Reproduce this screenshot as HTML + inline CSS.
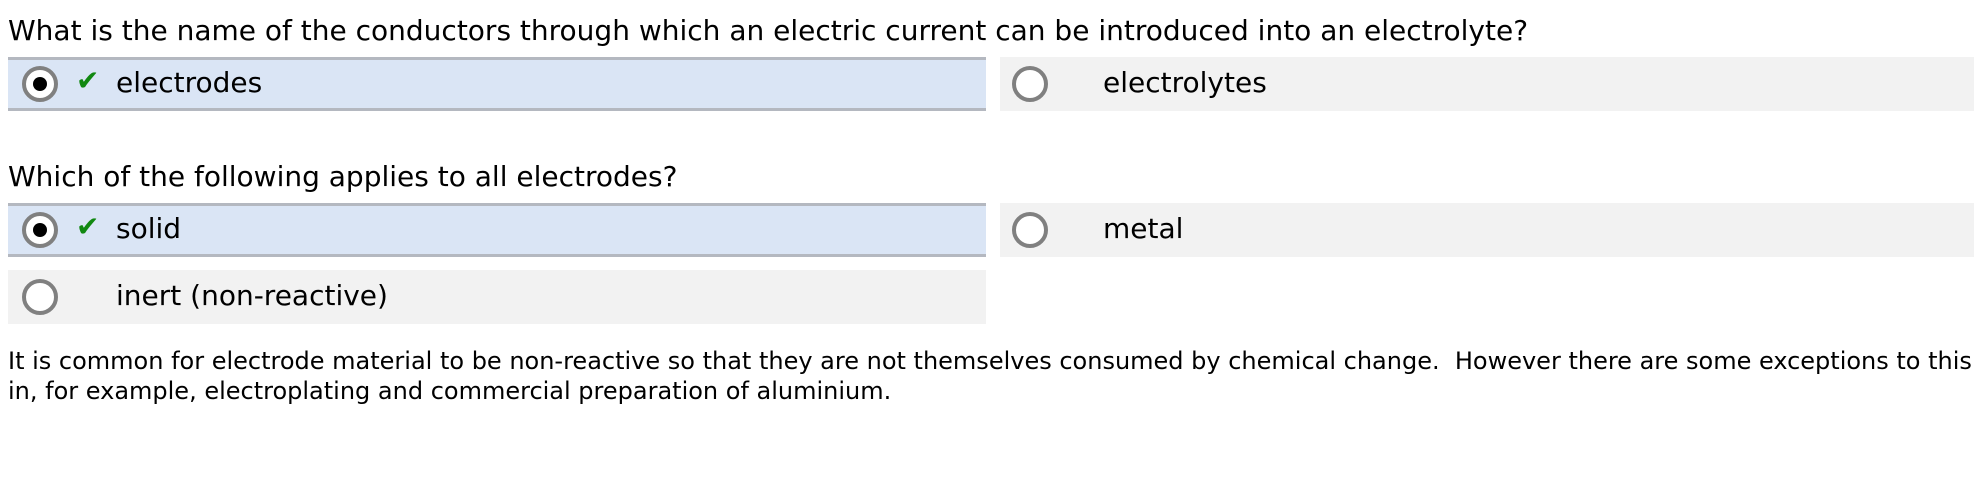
<!DOCTYPE html>
<html><head><meta charset="utf-8"><style>
body{margin:0;width:1974px;height:482px;background:#fff;font-family:"DejaVu Sans","Liberation Sans",sans-serif;font-size:24px;color:#000;position:relative;overflow:hidden}
.t{position:absolute;left:8px;white-space:nowrap}
.q{font-size:28px;line-height:33px}
.box{position:absolute;height:54px;box-sizing:border-box}
.sel{background:#dae5f5;border-top:3px solid #b4b8c0;border-bottom:3px solid #b4b8c0;left:8px;width:978px}
.un{background:#f2f2f2}
.r{position:absolute;width:36px;height:36px;border:4px solid #808080;border-radius:50%;background:#fff;box-sizing:border-box;top:50%;margin-top:-18px}
.r.on::after{content:"";position:absolute;left:7px;top:7px;width:14px;height:14px;border-radius:50%;background:#000}
.ck{position:absolute;left:68px;top:50%;margin-top:-20px;line-height:34px;color:#118811;font-size:28px;font-family:"DejaVu Sans",sans-serif}
.lbl{position:absolute;top:50%;margin-top:-18px;line-height:34px;font-size:28px}
</style></head><body>
<div class="t q" style="top:14px">What is the name of the conductors through which an electric current can be introduced into an electrolyte?</div>
<div class="box sel" style="top:57px"><div class="r on" style="left:14px"></div><div class="ck">✔</div><div class="lbl" style="left:108px">electrodes</div></div>
<div class="box un" style="top:57px;left:1000px;width:974px"><div class="r" style="left:12px"></div><div class="lbl" style="left:103px">electrolytes</div></div>
<div class="t q" style="top:160px">Which of the following applies to all electrodes?</div>
<div class="box sel" style="top:203px"><div class="r on" style="left:14px"></div><div class="ck">✔</div><div class="lbl" style="left:108px">solid</div></div>
<div class="box un" style="top:203px;left:1000px;width:974px"><div class="r" style="left:12px"></div><div class="lbl" style="left:103px">metal</div></div>
<div class="box un" style="top:270px;left:8px;width:978px"><div class="r" style="left:14px"></div><div class="lbl" style="left:108px">inert (non-reactive)</div></div>
<div class="t" style="top:346px;line-height:30px">It is common for electrode material to be non-reactive so that they are not themselves consumed by chemical change.&nbsp; However there are some exceptions to this<br>in, for example, electroplating and commercial preparation of aluminium.</div>
</body></html>
